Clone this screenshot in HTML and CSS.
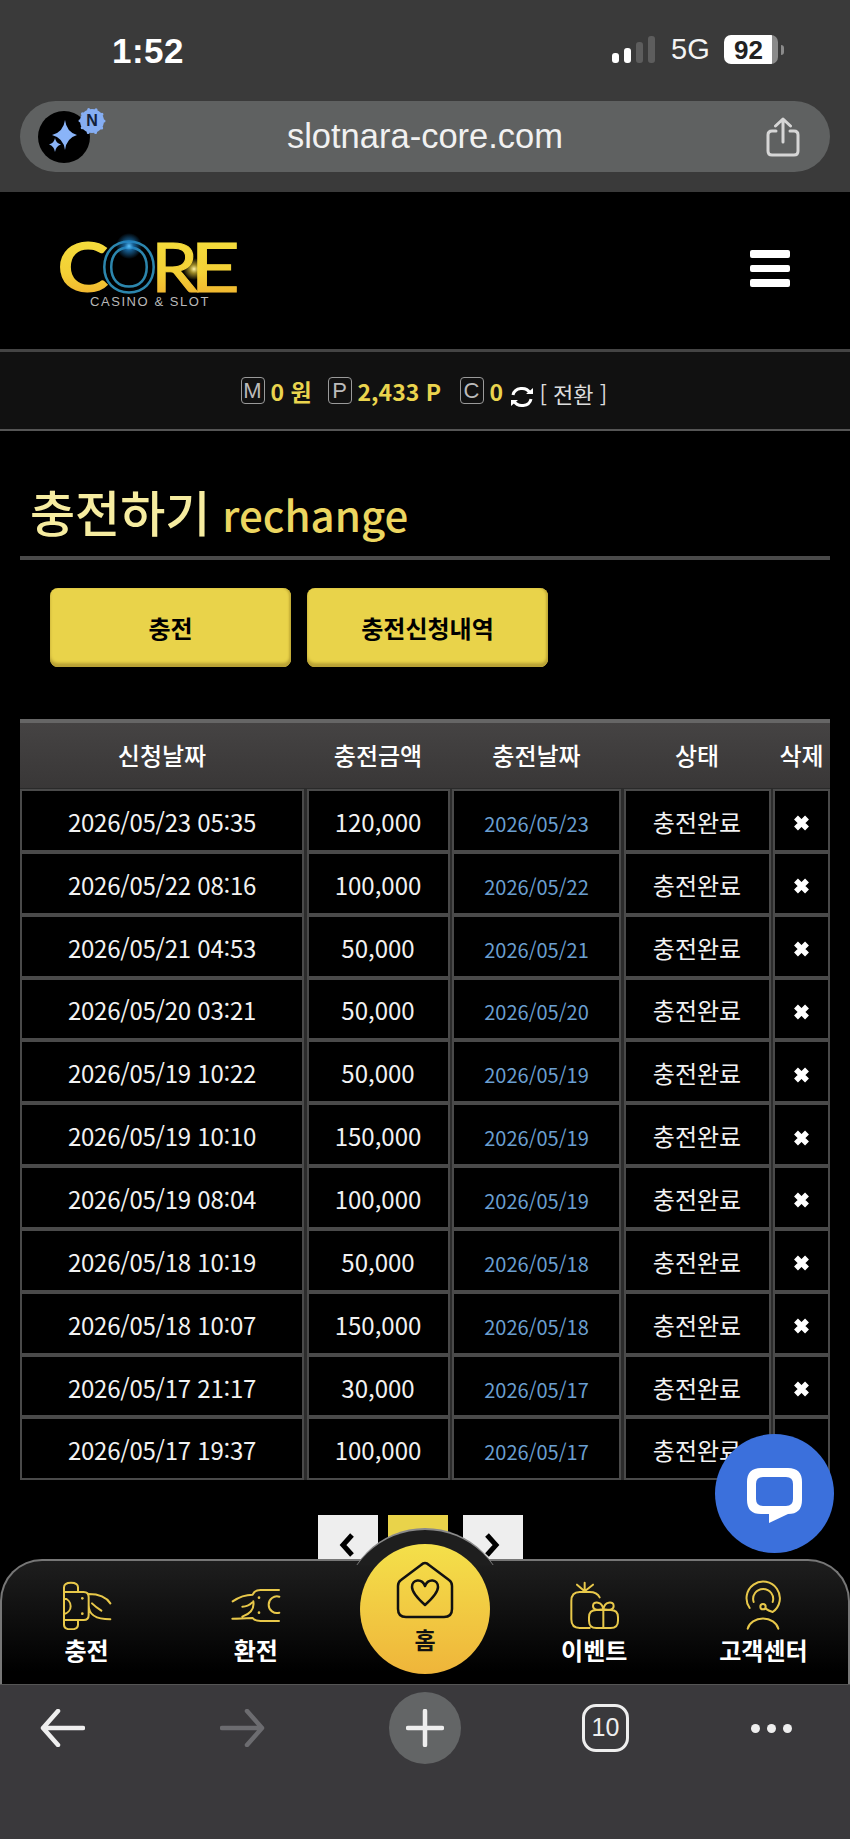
FILE: index.html
```html
<!DOCTYPE html>
<html lang="ko">
<head>
<meta charset="utf-8">
<title>충전하기</title>
<link rel="stylesheet" href="styles.css">
</head>
<body>
<div class="screen">
  <header class="chrome-top">
    <div class="status">
      <span class="time">1:52</span>
      <div class="status-right">
        <div class="signal"><i class="b1"></i><i class="b2"></i><i class="b3"></i><i class="b4"></i></div>
        <span class="net">5G</span>
        <span class="battery">92</span><span class="nub"></span>
      </div>
    </div>
    <div class="address">
      <div class="favicon">
        <svg class="spark" width="52" height="52" viewBox="0 0 52 52"><path d="M27 9 Q28.500 21 39 24 Q28.500 27 27 39 Q25.500 27 14 24 Q25.500 21 27 9Z"/><path d="M17 27 Q17.800 32 23 33.500 Q17.800 35 17 41 Q16.200 35 11 33.500 Q16.200 32 17 27Z"/></svg>
        <span class="n-badge"><svg width="30" height="30" viewBox="0 0 30 30"><circle cx="15" cy="15" r="12"/></svg><b>N</b></span>
      </div>
      <span class="url">slotnara-core.com</span>
      <svg class="share" width="34" height="40" viewBox="0 0 34 40"><path d="M10 14 H6 Q2 14 2 18 V34 Q2 38 6 38 H28 Q32 38 32 34 V18 Q32 14 28 14 H24 M17 25 V2 M9.500 9 L17 2 L24.500 9"/></svg>
    </div>
  </header>

  <main class="page">
    <div class="site-head">
      <a class="logo">
        <svg width="180" height="66" viewBox="0 0 180 66">
          <defs>
            <linearGradient id="gold" x1="0" y1="0" x2="0" y2="1"><stop offset="0" stop-color="#f5e23f"/><stop offset=".6" stop-color="#f3cf35"/><stop offset="1" stop-color="#efa82c"/></linearGradient>
            <radialGradient id="glow"><stop offset="0" stop-color="#5cc4ff"/><stop offset=".35" stop-color="#1f7fc4" stop-opacity=".75"/><stop offset="1" stop-color="#1f7fc4" stop-opacity="0"/></radialGradient>
            <radialGradient id="flare"><stop offset="0" stop-color="#fff6b0"/><stop offset=".4" stop-color="#f6d93c" stop-opacity=".6"/><stop offset="1" stop-color="#f6d93c" stop-opacity="0"/></radialGradient>
          </defs>
          <text class="logo-word" x="-3" y="51" textLength="52" lengthAdjust="spacingAndGlyphs">C</text>
          <text class="logo-word logo-r" x="91" y="51" textLength="47" lengthAdjust="spacingAndGlyphs">R</text>
          <text class="logo-word logo-r" x="130" y="51" textLength="50" lengthAdjust="spacingAndGlyphs">E</text>
          <text class="logo-o" x="41" y="51" textLength="56" lengthAdjust="spacingAndGlyphs">O</text>
          <circle cx="69" cy="5" r="13" fill="url(#glow)"/>
          <circle cx="134" cy="28" r="11" fill="url(#flare)"/>
          <text class="logo-sub" x="30" y="65" textLength="120">CASINO &amp; SLOT</text>
        </svg>
      </a>
      <div class="burger"><i></i><i></i><i></i></div>
    </div>

    <div class="balance">
      <span class="tag">M</span><b class="amt a-m">0 원</b>
      <span class="tag">P</span><b class="amt a-p">2,433 P</b>
      <span class="tag">C</span><b class="amt a-c">0</b>
      <svg class="refresh" width="24" height="22" viewBox="0 0 24 22"><path d="M3 9 A9 8 0 0 1 20 7 M21 13 A9 8 0 0 1 4 15"/><path class="fill" d="M16 8 H23 V2Z M8 14 H1 V20Z"/></svg>
      <span class="convert">[ 전환 ]</span>
    </div>

    <h1 class="title"><span class="t-ko">충전하기</span> <span class="t-en">rechange</span></h1>

    <div class="tabs">
      <a class="btn">충전</a>
      <a class="btn">충전신청내역</a>
    </div>

    <section class="grid-table">
      <div class="row head"><div>신청날짜</div><div>충전금액</div><div>충전날짜</div><div>상태</div><div>삭제</div></div>
      <div class="row"><div class="when">2026/05/23 05:35</div><div>120,000</div><div class="blue">2026/05/23</div><div>충전완료</div><div><svg class="x" width="17" height="16" viewBox="0 0 17 16"><path d="M3 2.500 L14 13.500 M14 2.500 L3 13.500"/></svg></div></div>
      <div class="row"><div class="when">2026/05/22 08:16</div><div>100,000</div><div class="blue">2026/05/22</div><div>충전완료</div><div><svg class="x" width="17" height="16" viewBox="0 0 17 16"><path d="M3 2.500 L14 13.500 M14 2.500 L3 13.500"/></svg></div></div>
      <div class="row"><div class="when">2026/05/21 04:53</div><div>50,000</div><div class="blue">2026/05/21</div><div>충전완료</div><div><svg class="x" width="17" height="16" viewBox="0 0 17 16"><path d="M3 2.500 L14 13.500 M14 2.500 L3 13.500"/></svg></div></div>
      <div class="row"><div class="when">2026/05/20 03:21</div><div>50,000</div><div class="blue">2026/05/20</div><div>충전완료</div><div><svg class="x" width="17" height="16" viewBox="0 0 17 16"><path d="M3 2.500 L14 13.500 M14 2.500 L3 13.500"/></svg></div></div>
      <div class="row"><div class="when">2026/05/19 10:22</div><div>50,000</div><div class="blue">2026/05/19</div><div>충전완료</div><div><svg class="x" width="17" height="16" viewBox="0 0 17 16"><path d="M3 2.500 L14 13.500 M14 2.500 L3 13.500"/></svg></div></div>
      <div class="row"><div class="when">2026/05/19 10:10</div><div>150,000</div><div class="blue">2026/05/19</div><div>충전완료</div><div><svg class="x" width="17" height="16" viewBox="0 0 17 16"><path d="M3 2.500 L14 13.500 M14 2.500 L3 13.500"/></svg></div></div>
      <div class="row"><div class="when">2026/05/19 08:04</div><div>100,000</div><div class="blue">2026/05/19</div><div>충전완료</div><div><svg class="x" width="17" height="16" viewBox="0 0 17 16"><path d="M3 2.500 L14 13.500 M14 2.500 L3 13.500"/></svg></div></div>
      <div class="row"><div class="when">2026/05/18 10:19</div><div>50,000</div><div class="blue">2026/05/18</div><div>충전완료</div><div><svg class="x" width="17" height="16" viewBox="0 0 17 16"><path d="M3 2.500 L14 13.500 M14 2.500 L3 13.500"/></svg></div></div>
      <div class="row"><div class="when">2026/05/18 10:07</div><div>150,000</div><div class="blue">2026/05/18</div><div>충전완료</div><div><svg class="x" width="17" height="16" viewBox="0 0 17 16"><path d="M3 2.500 L14 13.500 M14 2.500 L3 13.500"/></svg></div></div>
      <div class="row"><div class="when">2026/05/17 21:17</div><div>30,000</div><div class="blue">2026/05/17</div><div>충전완료</div><div><svg class="x" width="17" height="16" viewBox="0 0 17 16"><path d="M3 2.500 L14 13.500 M14 2.500 L3 13.500"/></svg></div></div>
      <div class="row"><div class="when">2026/05/17 19:37</div><div>100,000</div><div class="blue">2026/05/17</div><div>충전완료</div><div></div></div>
    </section>

    <div class="pager">
      <a class="pg"><svg width="20" height="26" viewBox="0 0 20 26"><path d="M15 3 L6 13 L15 23"/></svg></a>
      <a class="pg active"></a>
      <a class="pg"><svg width="20" height="26" viewBox="0 0 20 26"><path d="M5 3 L14 13 L5 23"/></svg></a>
    </div>

    <a class="chat">
      <svg width="58" height="58" viewBox="0 0 58 58"><path fill-rule="evenodd" d="M15 1 H42 Q56 1 56 15 V33 Q56 47 42 47 L23 56 V47 H15 Q1 47 1 33 V15 Q1 1 15 1Z M17 10 Q10 10 10 17 V32 Q10 39 17 39 H40 Q47 39 47 32 V17 Q47 10 40 10Z"/></svg>
    </a>

    <nav class="tabbar">
      <span class="bump"></span>
      <a class="item">
        <svg class="ico" width="50" height="50" viewBox="60 30 150 150"><path d="M108 66 V52 Q108 38 87 38 Q66 38 66 52 V164 Q66 178 87 178 Q108 178 108 164 V150 M66 66 H125 Q140 66 140 82 V135 Q140 150 125 150 H66 M66 85 A25 24 0 0 1 66 132 M140 72 C172 72 192 80 205 100 M150 100 Q160 110 178 122 M140 105 C140 135 160 148 205 148"/><circle class="dot" cx="121" cy="85" r="4"/><circle class="dot" cx="121" cy="131" r="4"/></svg>
        <span>충전</span>
      </a>
      <a class="item">
        <svg class="ico" width="54" height="50" viewBox="565 32 162 150"><path d="M715 62 H660 Q642 62 636 76 Q605 76 576 96 M715 155 H660 Q642 155 636 146 Q600 148 575 148 M638 96 C642 120 625 135 605 142 M605 112 Q622 112 634 100 M716 82 A25 25 0 1 0 716 130"/><circle class="dot" cx="655" cy="85" r="4"/><circle class="dot" cx="655" cy="130" r="4"/></svg>
        <span>환전</span>
      </a>
      <a class="item center">
        <span class="home">
          <svg class="ico-home" width="58" height="58" viewBox="0 0 58 58"><path d="M29 2 Q31 2 33 4 L53 19 Q56 21 56 25 V48 Q56 56 48 56 H10 Q2 56 2 48 V25 Q2 21 5 19 L25 4 Q27 2 29 2Z M29 44 C20 36 16 31 16 26 C16 18 26 17 29 25 C32 17 42 18 42 26 C42 31 38 36 29 44Z"/></svg>
          <span>홈</span>
        </span>
      </a>
      <a class="item">
        <svg class="ico" width="50" height="50" viewBox="88 32 150 150"><path d="M180 84 Q172 68 150 68 H120 Q95 68 95 95 V150 Q95 176 120 176 H150 M135 66 V40 M135 66 L112 46 M135 66 L160 46 M170 122 H213 Q235 122 235 144 V154 Q235 176 213 176 H170 Q148 176 148 154 V144 Q148 122 170 122Z M191 122 V176 M191 120 Q160 125 160 110 Q160 98 175 100 Q188 102 191 120 Q194 102 207 100 Q222 98 222 110 Q222 125 191 120"/></svg>
        <span>이벤트</span>
      </a>
      <a class="item">
        <svg class="ico" width="50" height="50" viewBox="599 32 150 150"><path d="M634 116 A50 50 0 1 1 703 128 Q690 124 682 118 M646 98 A30 30 0 1 1 703 98 M628 178 A47 38 0 0 1 720 178"/><circle cx="674" cy="112" r="8"/></svg>
        <span>고객센터</span>
      </a>
    </nav>
  </main>

  <footer class="chrome-bottom">
    <svg class="tool" width="46" height="38" viewBox="0 0 46 38"><path d="M44 19 H4 M19 2 L4 19 L19 36"/></svg>
    <svg class="tool dim" width="46" height="38" viewBox="0 0 46 38"><path d="M2 19 H42 M27 2 L42 19 L27 36"/></svg>
    <span class="plus"><svg class="tool" width="38" height="38" viewBox="0 0 38 38"><path d="M19 2 V36 M2 19 H36"/></svg></span>
    <span class="tabs-count">10</span>
    <span class="more"><i></i><i></i><i></i></span>
  </footer>
</div>
</body>
</html>
```
FILE: styles.css
```css
* { box-sizing: border-box; }
html, body { margin: 0; padding: 0; background: #000; }
body { font-family: "Noto Sans CJK KR", "Noto Sans", sans-serif; color: #fff; }
.screen { width: 850px; height: 1839px; display: flex; flex-direction: column; overflow: hidden; }

/* browser top */
.chrome-top { height: 192px; flex: none; background: #3a3a3a; padding: 0 20px; font-family: "Liberation Sans", sans-serif; }
.status { height: 101px; display: flex; justify-content: space-between; align-items: center; padding: 0 46px 0 92px; }
.time { font-size: 35px; font-weight: 700; color: #fff; width: 70px; letter-spacing: .5px; }
.status-right { display: flex; align-items: center; margin-top: -2px; }
.signal { display: flex; align-items: flex-end; gap: 4.500px; height: 27px; margin-right: 16px; }
.signal i { display: block; width: 7.500px; border-radius: 3px; background: #fff; }
.signal .b1 { height: 10px; }
.signal .b2 { height: 15px; }
.signal .b3 { height: 21px; background: #5d5d5d; }
.signal .b4 { height: 27px; background: #5d5d5d; }
.net { font-size: 29px; width: 39px; margin-right: 14px; color: #f4f4f4; }
.battery { width: 54px; height: 29px; border-radius: 7px; background: linear-gradient(90deg, #fff 88%, #8a8a8a 88%); color: #222; font-size: 26px; font-weight: 700; line-height: 30px; text-align: center; padding-right: 5px; }
.nub { width: 3px; height: 10px; margin-left: 3px; border-radius: 0 3px 3px 0; background: #8a8a8a; }

.address { height: 71px; border-radius: 36px; background: #5f6161; display: grid; grid-template-columns: 1fr auto 1fr; align-items: center; padding: 0 18px; }
.favicon { position: relative; width: 52px; height: 52px; border-radius: 50%; background: #000; }
.spark { display: block; fill: #8ab4f8; }
.n-badge { position: absolute; left: 39px; top: -5px; width: 30px; height: 30px; }
.n-badge svg { display: block; fill: #86aef3; stroke: #86aef3; stroke-width: 3; stroke-linecap: round; stroke-dasharray: 0 7.540; }
.n-badge b { position: absolute; inset: 0; text-align: center; font-size: 16px; line-height: 30px; color: #12203a; }
.url { font-size: 34.500px; color: #f1f1f1; line-height: 71px; }
.share { justify-self: end; margin-right: 12px; fill: none; stroke: #d6d6d6; stroke-width: 3; stroke-linecap: round; stroke-linejoin: round; }

/* page */
.page { position: relative; flex: 1; background: #000; overflow: hidden; }
.site-head { height: 157px; display: flex; justify-content: space-between; align-items: center; padding: 0 60px; }
.logo { display: block; height: 66px; margin-top: 7px; }
.logo svg { display: block; overflow: visible; }
.logo-word { font-family: Lato, sans-serif; font-size: 68px; font-weight: 700; fill: url(#gold); }
.logo-r { font-weight: 400; stroke: url(#gold); stroke-width: 1; }
.logo-o { font-family: Lato, sans-serif; font-size: 70px; font-weight: 400; fill: none; stroke: #2c86ad; stroke-width: 2.500; }
.logo-sub { font-family: "Liberation Sans", sans-serif; font-size: 13px; fill: #b9b9b9; letter-spacing: 1.500px; }
.burger { display: flex; flex-direction: column; gap: 7px; margin-top: -4px; }
.burger i { display: block; width: 40px; height: 7.500px; border-radius: 2px; background: #fff; }

.balance { height: 82px; background: #111; border-top: 3px solid #444; border-bottom: 2px solid #555; display: flex; align-items: center; justify-content: center; padding-right: 3px; }
.tag { width: 24px; height: 27px; border: 1px solid #9a9a9a; border-radius: 4px; color: #bbb; font-family: "Liberation Sans", sans-serif; font-size: 22px; line-height: 25px; text-align: center; }
.amt { color: #ead44e; font-size: 23px; line-height: 30px; margin-left: 6px; }
.a-m { margin-right: 18px; width: 39px; white-space: nowrap; }
.a-p { margin-right: 18px; width: 84px; white-space: nowrap; }
.a-c { margin-right: 6px; width: 14px; }
.refresh { margin-top: 12px; margin-right: 6px; fill: none; stroke: #fff; stroke-width: 3; }
.refresh .fill { fill: #fff; stroke: none; }
.convert { font-size: 22px; color: #ddd; margin-top: 4px; width: 67px; white-space: nowrap; }

.title { margin: 0 20px; padding: 47px 0 0 10px; height: 129px; border-bottom: 4px solid #4a4a4a; font-weight: 500; line-height: 66px; white-space: nowrap; }
.t-ko { font-size: 49px; color: #f6eca0; }
.t-en { font-size: 42px; color: #ecd660; margin-left: 3px; }

.tabs { display: flex; gap: 16px; padding: 28px 50px 0; }
.btn { width: 241px; height: 79px; border-radius: 8px; background: #e9d34a; box-shadow: inset 0 -4px 3px #b8a135, inset -2px 0 2px #c9b23a; color: #000; font-size: 24px; font-weight: 700; display: flex; align-items: center; justify-content: center; }

.grid-table { margin: 52px 20px 0; }
.row { display: grid; grid-template-columns: 284px 143px 169px 147px 57px; column-gap: 2.500px; height: 62.850px; background: #2c2c2c; }
.row > div { border: 2px solid #4a4a4a; background: #000; display: flex; align-items: center; justify-content: center; font-size: 24px; color: #f2f2f2; white-space: nowrap; padding-top: 2px; }
.row > div.when { letter-spacing: -.25px; }
.row > div.blue { font-size: 20px; color: #6a9fd0; padding-top: 6px; }
.x { fill: none; stroke: #fff; stroke-width: 5.500; margin-top: 4px; }
.row.head { height: 70px; border-top: 4px solid #666; background: linear-gradient(#454343, #393737); border-bottom: 1px solid #2a2a2a; }
.row.head > div { border: 0; background: none; color: #fff; font-weight: 500; padding: 0 0 2px; }

.pager { display: flex; justify-content: center; padding: 35px 10px 0 0; }
.pg { width: 60px; height: 60px; background: #eee; display: flex; justify-content: center; padding-top: 17px; }
.pg svg { fill: none; stroke: #000; stroke-width: 5; margin-left: -2px; }
.pg.active { background: #e9d34a; margin: 0 15px 0 10px; }

.chat { position: absolute; left: 715px; top: 1242px; width: 119px; height: 119px; border-radius: 50%; background: #3b70dc; display: flex; align-items: center; justify-content: center; padding-top: 4px; }
.chat svg { fill: #fff; }

.tabbar { position: absolute; left: 0; right: 0; bottom: 0; height: 125px; border: 2px solid #777; border-bottom: 0; border-radius: 42px 42px 0 0; background: linear-gradient(#1e1e1e, #000 90%); display: grid; grid-template-columns: repeat(5, 1fr); }
.bump { position: absolute; left: 341px; top: -33px; width: 164px; height: 164px; border-radius: 50%; border-top: 2px solid #8a8a8a; background: #1e1e1e; clip-path: inset(0 0 127px 0); }
.item { position: relative; display: flex; flex-direction: column; align-items: center; padding-top: 19px; }
.item > span:not(.home) { font-size: 24px; font-weight: 700; color: #fff; line-height: 34px; margin-top: 3px; white-space: nowrap; }
.ico { display: block; fill: none; stroke: #e8c84a; stroke-width: 6; stroke-linecap: round; stroke-linejoin: round; }
.ico .dot { fill: #e8c84a; stroke: none; }
.home { position: absolute; left: 50%; top: -17px; width: 130px; height: 130px; margin-left: -65px; border-radius: 50%; background: linear-gradient(#f4e04a, #efb53a); display: flex; flex-direction: column; align-items: center; padding-top: 17px; color: #111; font-size: 23px; font-weight: 700; line-height: 30px; }
.ico-home { display: block; fill: none; stroke: #111; stroke-width: 2.500; stroke-linejoin: round; margin-bottom: 5px; }

/* browser bottom */
.chrome-bottom { height: 155px; flex: none; background: #3a393c; border-top: 1px solid #555; display: grid; grid-template-columns: 181px 169px 193px 168.500px 1fr; align-content: start; align-items: center; justify-items: start; padding: 7px 0 0 39px; }
.tool { fill: none; stroke: #eee; stroke-width: 4.500; stroke-linecap: round; stroke-linejoin: round; display: block; }
.tool.dim { stroke: #6c6c70; }
.plus { width: 72px; height: 72px; border-radius: 50%; background: #636566; display: flex; align-items: center; justify-content: center; }
.tabs-count { width: 47px; height: 48px; border: 3.500px solid #eee; border-radius: 14px; font-size: 25px; line-height: 41px; text-align: center; color: #eee; font-family: "Liberation Sans", sans-serif; }
.more { display: flex; gap: 7px; }
.more i { width: 9px; height: 9px; border-radius: 50%; background: #eee; }
```
